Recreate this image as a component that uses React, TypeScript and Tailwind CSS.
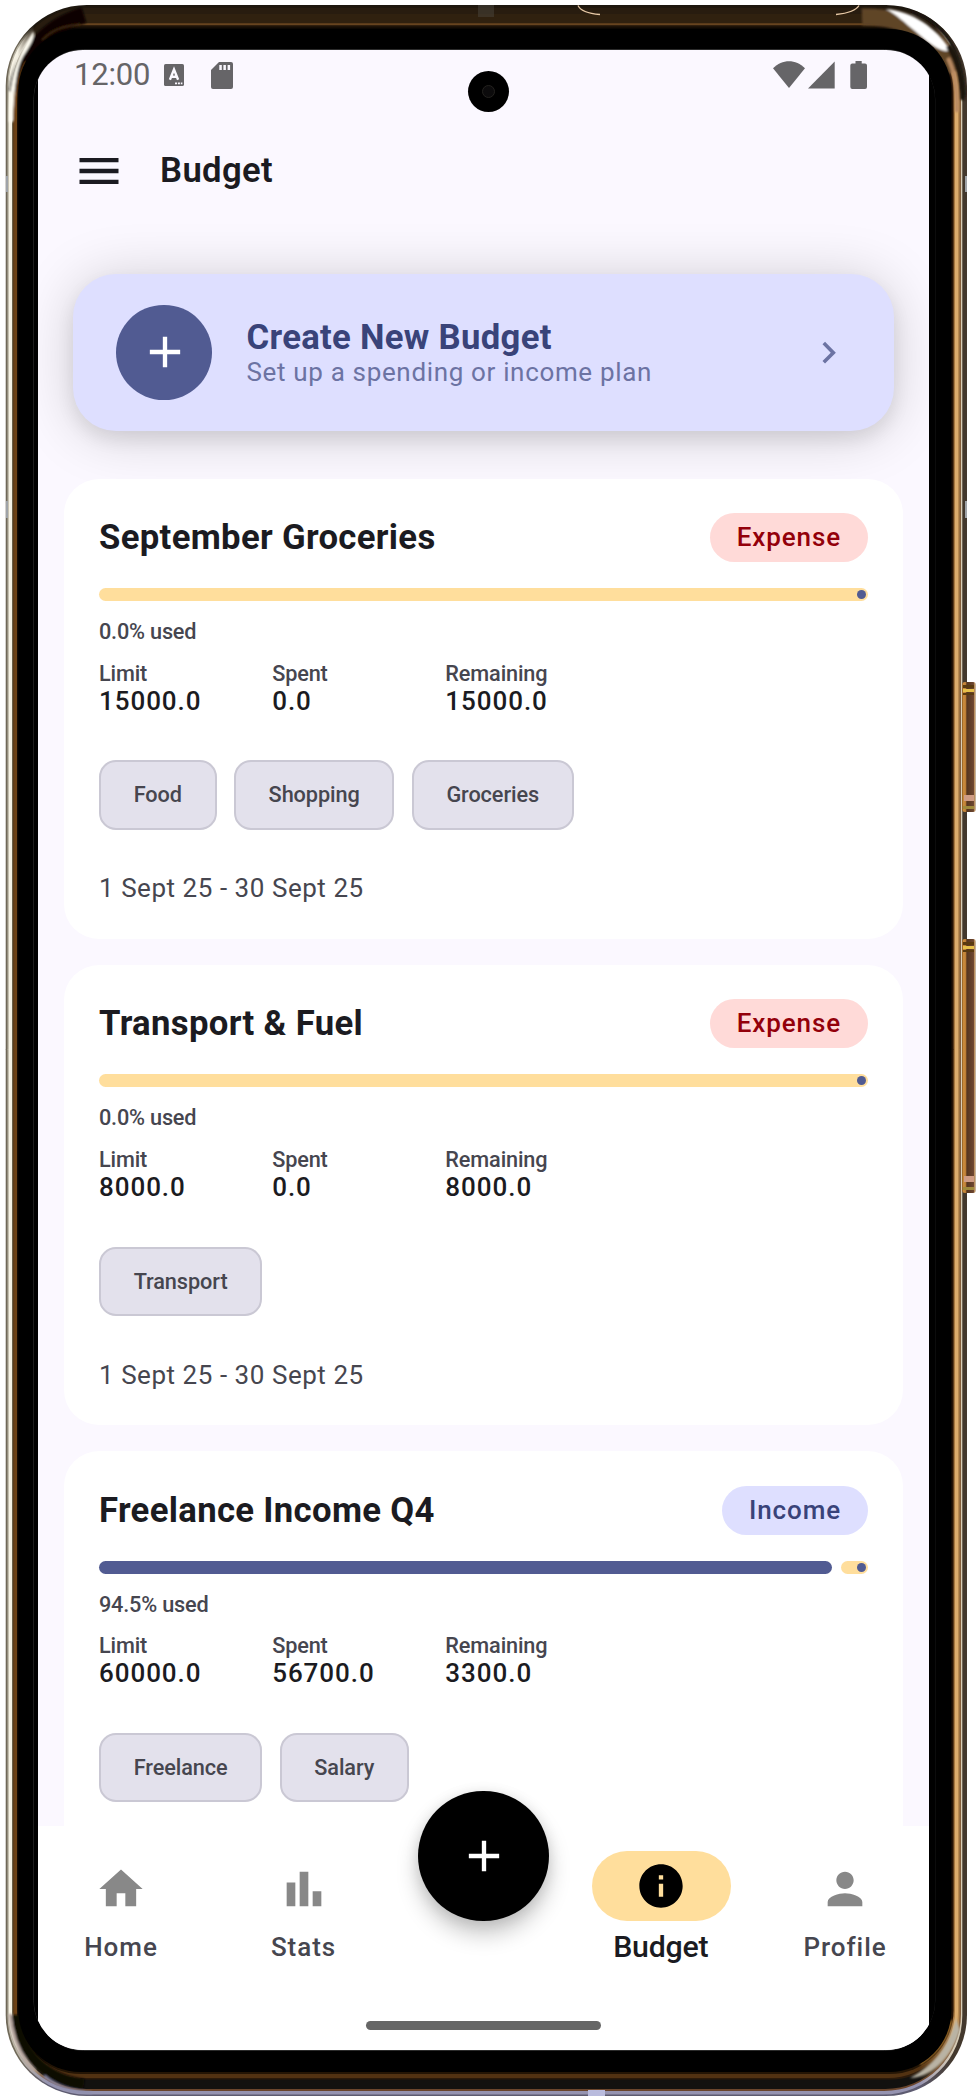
import React from "react";

type Tone = "expense" | "income";

interface Budget {
  title: string;
  tone: Tone;
  used: number;
  limit: string;
  spent: string;
  remaining: string;
  tags: string[];
  range: string;
}

const budgets: Budget[] = [
  {
    title: "September Groceries",
    tone: "expense",
    used: 0,
    limit: "15000.0",
    spent: "0.0",
    remaining: "15000.0",
    tags: ["Food", "Shopping", "Groceries"],
    range: "1 Sept 25 - 30 Sept 25",
  },
  {
    title: "Transport & Fuel",
    tone: "expense",
    used: 0,
    limit: "8000.0",
    spent: "0.0",
    remaining: "8000.0",
    tags: ["Transport"],
    range: "1 Sept 25 - 30 Sept 25",
  },
  {
    title: "Freelance Income Q4",
    tone: "income",
    used: 94.5,
    limit: "60000.0",
    spent: "56700.0",
    remaining: "3300.0",
    tags: ["Freelance", "Salary"],
    range: "",
  },
];

/* ---------- device frame ---------- */

interface Layer {
  x0: number;
  y0: number;
  x1: number;
  y1: number;
  r: number;
  left: string;
  right: string;
  top: string;
  bottom: string;
}

const layers: Layer[] = [
  { x0: 5.7, y0: 5, x1: 967, y1: 2096, r: 81, left: "#6f6858", right: "#43382d", top: "#1c160e", bottom: "#5d5b70" },
  { x0: 7.5, y0: 6, x1: 962.3, y1: 2094.5, r: 79, left: "#b9b4a4", right: "#d9ceb8", top: "#1f170d", bottom: "#9593b0" },
  { x0: 8.8, y0: 8, x1: 961, y1: 2091, r: 77, left: "#f6f2e4", right: "#86603c", top: "#281c0f", bottom: "#6a452c" },
  { x0: 12, y0: 14, x1: 959.4, y1: 2089, r: 74, left: "#6b6048", right: "#b98a50", top: "#30210f", bottom: "#12110f" },
  { x0: 13.2, y0: 23.3, x1: 958, y1: 2079.5, r: 68, left: "#5a3510", right: "#dcab6c", top: "#67441f", bottom: "#2c1a0a" },
  { x0: 14.2, y0: 25.3, x1: 955, y1: 2078, r: 67, left: "#6e4316", right: "#a87840", top: "#1d1207", bottom: "#523212" },
  { x0: 17, y0: 27.5, x1: 953.6, y1: 2074, r: 64, left: "#140c04", right: "#241104", top: "#0b0703", bottom: "#241505" },
];

function DeviceFrame() {
  return (
    <svg className="absolute inset-0" width="978" height="2100" viewBox="0 0 978 2100" fill="none" aria-hidden="true">
      <defs>
        {layers.map((l, i) => (
          <React.Fragment key={i}>
            <linearGradient id={`t${i}`} gradientUnits="userSpaceOnUse" x1="0" x2="978" y1="0" y2="0">
              <stop offset="0.018" stopColor={l.left} />
              <stop offset="0.035" stopColor={l.top} />
              <stop offset="0.955" stopColor={l.top} />
              <stop offset="0.974" stopColor={l.right} />
            </linearGradient>
            <linearGradient id={`b${i}`} gradientUnits="userSpaceOnUse" x1="0" x2="978" y1="0" y2="0">
              <stop offset="0.018" stopColor={l.left} />
              <stop offset="0.05" stopColor={l.bottom} />
              <stop offset="0.94" stopColor={l.bottom} />
              <stop offset="0.974" stopColor={l.right} />
            </linearGradient>
          </React.Fragment>
        ))}
        <linearGradient id="key" x1="0" x2="1" y1="0" y2="0">
          <stop offset="0" stopColor="#8a5a20" />
          <stop offset="0.12" stopColor="#cf8f3e" />
          <stop offset="0.28" stopColor="#b87a34" />
          <stop offset="0.34" stopColor="#54351f" />
          <stop offset="0.82" stopColor="#6d4630" />
          <stop offset="0.88" stopColor="#b98a55" />
          <stop offset="1" stopColor="#c9c2b8" />
        </linearGradient>
        <filter id="soft" filterUnits="userSpaceOnUse" x="0" y="0" width="978" height="2100">
          <feGaussianBlur stdDeviation="1.1" />
        </filter>
        <clipPath id="body">
          <rect x="5.7" y="5" width="961.3" height="2091" rx="81" />
        </clipPath>
      </defs>
      {layers.map((l, i) => (
        <React.Fragment key={i}>
          <path
            fill={`url(#t${i})`}
            d={`M${l.x0} 1050V${l.y0 + l.r}A${l.r} ${l.r} 0 0 1 ${l.x0 + l.r} ${l.y0}H${l.x1 - l.r}A${l.r} ${l.r} 0 0 1 ${l.x1} ${l.y0 + l.r}V1050Z`}
          />
          <path
            fill={`url(#b${i})`}
            d={`M${l.x0} 1049.5V${l.y1 - l.r}A${l.r} ${l.r} 0 0 0 ${l.x0 + l.r} ${l.y1}H${l.x1 - l.r}A${l.r} ${l.r} 0 0 0 ${l.x1} ${l.y1 - l.r}V1049.5Z`}
          />
        </React.Fragment>
      ))}

      {/* corner reflections */}
      <g clipPath="url(#body)">
        <g filter="url(#soft)">
          <path d="M17 92C20 60 42 28 84 15" stroke="#0a0603" strokeWidth="16" />
          <path d="M42 40C52 30 62 26 80 24.500" stroke="#4a2f12" strokeWidth="1.300" />
          <path d="M9 122C9.500 85 13 60 33.500 31C35.500 37 30 46 24 55C17 66 14 88 13 122Z" fill="#fffdf2" />
          <path d="M14.500 120C14.500 96 18 76 26 62" stroke="#6e4316" strokeWidth="2" />
          <path d="M862 17C905 16 936 34 953 72" stroke="#5e4426" strokeWidth="17" />
          <path d="M886 9C912 11 937 28 950 50C942 54 930 44 915 31C905 23 896 14 886 9Z" fill="#fff" />
          <path d="M912 12C946 22 962 52 964.500 96" stroke="#1a130d" strokeWidth="3" />
          <path d="M948 46C957 60 961.500 74 962.500 100" stroke="#1a130d" strokeWidth="5" />
          <path d="M948 58C954 70 957 84 957 112" stroke="#b98a62" strokeWidth="4" />
        </g>
        <g filter="url(#soft)">
          <path d="M956 2018C950 2044 936 2064 910 2078C928 2078 950 2062 960 2030Z" fill="#b9b3a4" />
          <path d="M951 2020C948 2040 936 2054 920 2064" stroke="#a8752c" strokeWidth="2.500" />
          <path d="M15 2015C18 2045 38 2078 84 2084" stroke="#0c0805" strokeWidth="10" />
          <path d="M10 2014C12 2038 20 2056 34 2071" stroke="#b7a7a0" strokeWidth="3.500" />
          <path d="M44 2076C58 2088 72 2091 92 2093" stroke="#8f8fae" strokeWidth="2.500" />
        </g>
      </g>

      <rect x="18.3" y="29" width="933.2" height="2043" rx="62" fill="#000" />
      <rect x="33.8" y="49.5" width="901" height="2001" rx="50" stroke="#2b2b2b" strokeWidth="1" />

      {/* antenna lines */}
      <path d="M578 5.5C580 10 588 13.5 600 14.5M859 5.5C857 9 850 13 836 14.5" stroke="#e6c7a4" strokeWidth="1.3" />
      <path d="M478 5h16v12h-16z" fill="#4a453e" opacity=".5" />
      <path d="M6 176h2v16H6zM965 176h2v16h-2zM6 501h2v17H6zM965 501h2v17h-2z" fill="#9fa3a8" />
      <path d="M588 2090h17v6h-17z" fill="#b9bbdd" />

      {/* side keys */}
      {[
        [682, 130],
        [939, 254],
      ].map(([y, h]) => (
        <g key={y}>
          <rect x="962" y={y} width="14" height={h} rx="3" fill="url(#key)" />
          <path d={`M963 ${y + 3}h11v3h-11zM963 ${y + 11}h11v2h-11z`} fill="#5a3a10" />
          <path d={`M963 ${y + 7}h11v3h-11z`} fill="#e6c04a" />
          <path d={`M964 ${y + h - 17}h10v6h-10z`} fill="#cf9c84" />
          <path d={`M963 ${y + h - 6}h11v3h-11z`} fill="#a08a3c" />
        </g>
      ))}
    </svg>
  );
}

/* ---------- icons ---------- */

function Icon({ d, size = 52, className = "" }: { d: string; size?: number; className?: string }) {
  return (
    <svg width={size} height={size} viewBox="0 0 24 24" fill="currentColor" className={`shrink-0 ${className}`} aria-hidden="true">
      <path d={d} fillRule="evenodd" />
    </svg>
  );
}

const paths = {
  menu: "M3 18h18v-2H3v2zm0-5h18v-2H3v2zm0-7v2h18V6H3z",
  add: "M19 13h-6v6h-2v-6H5v-2h6V5h2v6h6v2z",
  chevron: "M8.59 16.59 13.17 12 8.59 7.41 10 6l6 6-6 6z",
  home: "M10 20v-6h4v6h5v-8h3L12 3 2 12h3v8z",
  stats: "M4 9h4v11H4zM16 13h4v7h-4zM10 4h4v16h-4z",
  info: "M12 2C6.48 2 2 6.48 2 12s4.48 10 10 10 10-4.48 10-10S17.52 2 12 2zm1 15h-2v-6h2v6zm0-8h-2V7h2v2z",
  person: "M12 12c2.21 0 4-1.79 4-4s-1.79-4-4-4-4 1.79-4 4 1.79 4 4 4zm0 2c-2.67 0-8 1.34-8 4v2h16v-2c0-2.66-5.33-4-8-4z",
};

function StatusBar() {
  return (
    <div className="flex h-[50px] items-center justify-between pr-[62px] pl-[36px] text-[#666568]">
      <div className="flex items-center">
        <span className="w-[90px] text-[31px] leading-[36px] tracking-[-0.200px]">12:00</span>
        <svg width="20" height="22" viewBox="0 0 20 22" aria-hidden="true">
          <rect width="20" height="22" rx="1.6" fill="currentColor" />
          <path d="M5.900 15.700 10 5.500 14.100 15.700M7.500 12.800h5" fill="none" stroke="#faf8ff" strokeWidth="2.400" />
          <path d="M11 18.6h2v1.6h-2zM13.9 18.6h2v1.6h-2zM16.8 18.6h1.6v1.6h-1.6z" fill="#faf8ff" />
        </svg>
        <svg width="22" height="27" viewBox="0 0 22 27" className="ml-[27px]" aria-hidden="true">
          <path d="M8 0h12a2 2 0 0 1 2 2v23a2 2 0 0 1-2 2H2a2 2 0 0 1-2-2V8z" fill="currentColor" />
          <path d="M8.3 3h2.5v5H8.3zM12.4 3h2.5v5h-2.5zM16.6 3h2.5v5h-2.5z" fill="#faf8ff" />
        </svg>
      </div>
      <svg width="94" height="28" viewBox="0 0 94 28" fill="currentColor" aria-hidden="true">
        <path d="M0 7.2C9-2.2 23-2.2 32 7.2L16 27z" />
        <path d="M35 27.5 61.7.6v26.9z" />
        <path d="M82.5 0h6.2v2.6h3.3a2 2 0 0 1 2 2V26a2 2 0 0 1-2 2H79.300a2 2 0 0 1-2-2V4.600a2 2 0 0 1 2-2h3.200z" />
      </svg>
    </div>
  );
}

function CreateCard() {
  return (
    <section className="mx-[35px] mt-[70px] flex h-[156.500px] shrink-0 items-center rounded-[43px] bg-[#dedfff] px-[43.300px] shadow-[0_9px_18px_rgba(0,0,0,0.08),0_4px_56px_rgba(0,0,0,0.18)]">
      <div className="flex size-[95.500px] items-center justify-center rounded-full bg-[#515b92] text-white">
        <Icon d={paths.add} className="relative left-[0.500px]" />
      </div>
      <div className="ml-[34.700px] flex-1 pt-[3px]">
        <h2 className="text-[34.700px] leading-[38px] font-bold tracking-[0.300px] text-[#394379]">Create New Budget</h2>
        <p className="text-[26px] leading-[33px] tracking-[0.660px] text-[#6c73a3]">Set up a spending or income plan</p>
      </div>
      <Icon d={paths.chevron} size={43.3} className="text-[#6c73a3]" />
    </section>
  );
}

function Progress({ used }: { used: number }) {
  return (
    <div className="mt-[26px] flex h-[13px] gap-[8.700px]">
      {used > 0 && <div className="rounded-full bg-[#515b92]" style={{ width: `${used + 0.8}%` }} />}
      <div className="flex flex-1 items-center justify-end rounded-full bg-[#ffde9c] pr-[2px]">
        <div className="size-[9px] rounded-full bg-[#515b92]" />
      </div>
    </div>
  );
}

function Stat({ label, value }: { label: string; value: string }) {
  return (
    <div className="w-[173.200px]">
      <div className="text-[21.700px] leading-[28px] font-medium tracking-[-0.140px] text-[#46464f]">{label}</div>
      <div className="text-[26px] leading-[27px] font-medium tracking-[0.940px] text-[#1b1b21]">{value}</div>
    </div>
  );
}

function BudgetCard({ b }: { b: Budget }) {
  const tone = b.tone === "expense" ? "bg-[#ffdad8] text-[#93000a]" : "bg-[#dedfff] text-[#394379]";
  return (
    <article className="relative h-[460.300px] shrink-0 rounded-[35px] bg-white px-[34.700px] pt-[34.700px]">
      <div className="flex h-[49px] items-center justify-between">
        <h3 className="text-[34.700px] leading-[49px] font-bold tracking-[0.330px] text-[#1b1b21]">{b.title}</h3>
        <span className={`rounded-full pr-[27px] pl-[27px] text-[26px] leading-[49px] font-medium tracking-[0.900px] ${tone}`}>{b.tone === "expense" ? "Expense" : "Income"}</span>
      </div>
      <Progress used={b.used} />
      <p className="mt-[14px] text-[21.700px] leading-[34.700px] font-medium tracking-[-0.200px] text-[#46464f]">{b.used.toFixed(1)}% used</p>
      <div className="mt-[10px] flex">
        <Stat label="Limit" value={b.limit} />
        <Stat label="Spent" value={b.spent} />
        <Stat label="Remaining" value={b.remaining} />
      </div>
      <div className="mt-[45.500px] flex gap-[17.300px]">
        {b.tags.map((t) => (
          <span key={t} className="rounded-[17px] border-2 border-[#cac8d4] bg-[#e3e1ec] px-[32.700px] text-[21.700px] leading-[65.500px] font-medium tracking-[-0.080px] text-[#46464f]">
            {t}
          </span>
        ))}
      </div>
      <p className="mt-[41.500px] text-[26px] leading-[34.700px] tracking-[0.540px] text-[#46464f]">{b.range}</p>
    </article>
  );
}

function NavItem({ icon, label }: { icon: string; label: string }) {
  return (
    <a className="flex flex-col items-center pt-[37px] text-[#46464f]">
      <Icon d={icon} className="text-[#888888]" />
      <span className="mt-[15px] text-[26px] leading-[34px] font-medium tracking-[0.950px]">{label}</span>
    </a>
  );
}

function BottomNav() {
  return (
    <nav className="relative grid h-[224.500px] shrink-0 grid-cols-[166px_199px_160.500px_195.500px_172px] grid-rows-[190px_auto] bg-white">
      <NavItem icon={paths.home} label="Home" />
      <NavItem icon={paths.stats} label="Stats" />
      <div className="flex justify-center">
        <button className="-mt-[35px] flex size-[130.500px] items-center justify-center rounded-full bg-black text-white shadow-[0_13px_22px_rgba(0,0,0,0.22),0_2px_14px_rgba(0,0,0,0.1)]">
          <Icon d={paths.add} className="relative left-[0.500px]" />
        </button>
      </div>
      <a className="flex flex-col items-center pt-[25.500px] text-[#1b1b21]">
        <span className="flex h-[69.500px] w-[139px] items-center justify-center rounded-full bg-[#ffde9c] text-black">
          <Icon d={paths.info} />
        </span>
        <span className="mt-[8px] pr-[1px] text-[30.300px] leading-[36px] font-medium tracking-[-0.250px]">Budget</span>
      </a>
      <NavItem icon={paths.person} label="Profile" />
      <div className="col-span-5 flex justify-center">
        <div className="mt-[5.500px] mr-[3px] h-[9px] w-[235px] rounded-full bg-[#666666]" />
      </div>
    </nav>
  );
}

export default function App() {
  return (
    <div className="relative h-[2100px] w-[978px] overflow-hidden bg-white pt-[50px] pl-[34px] font-['Roboto',sans-serif]">
      <DeviceFrame />
      <div className="relative h-[2000px] w-[900.500px] overflow-hidden rounded-[49px] bg-black pr-[5.500px] pl-[4px]">
        <main className="flex h-full flex-col bg-[#fbf8ff]">
          <StatusBar />
          <header className="mt-[45px] flex h-[52px] items-center pl-[35px] text-[#1b1b21]">
            <Icon d={paths.menu} className="relative -top-[0.500px]" />
            <h1 className="-mt-[2px] ml-[35px] text-[34.700px] leading-[42px] font-semibold tracking-[0.360px]">Budget</h1>
          </header>
          <div className="mt-[7px] flex min-h-0 flex-1 flex-col overflow-hidden">
            <CreateCard />
            <div className="mx-[26.300px] mt-[48px] flex flex-col gap-[26px]">
              {budgets.map((b) => (
                <BudgetCard key={b.title} b={b} />
              ))}
            </div>
          </div>
          <BottomNav />
        </main>
        {/* front camera cutout */}
        <div className="absolute top-[21px] left-[433.800px] flex size-[41px] items-center justify-center rounded-full bg-black">
          <div className="size-[13px] rounded-full border border-[#24221f] bg-[#0c0b0c]" />
        </div>
      </div>
    </div>
  );
}
